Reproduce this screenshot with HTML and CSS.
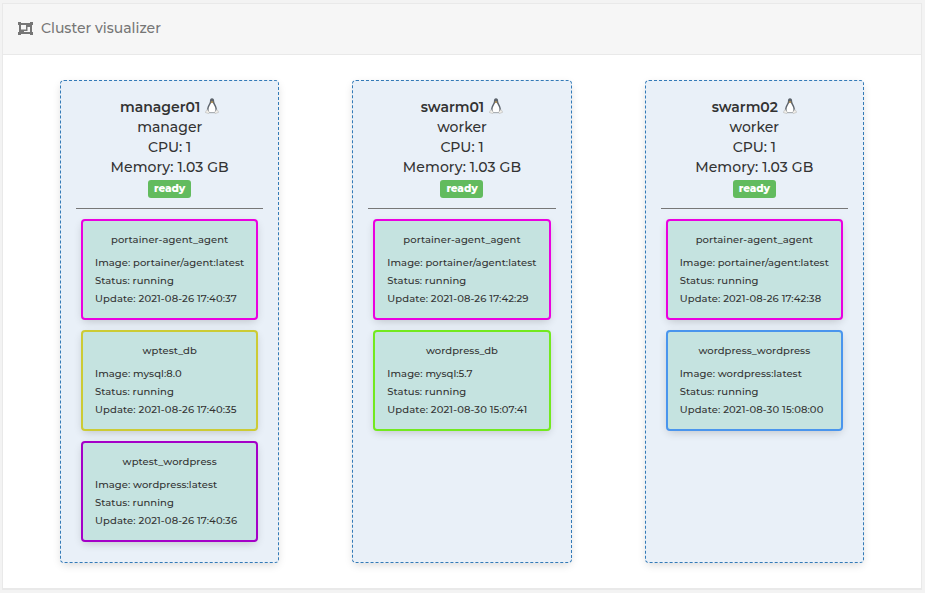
FILE: index.html
```html
<!DOCTYPE html>
<html lang="en">
<head>
<meta charset="utf-8">
<title>Cluster visualizer</title>
<link rel="stylesheet" href="styles.css">
</head>
<body>
<svg width="0" height="0" class="defs" aria-hidden="true">
  <symbol id="tux" viewBox="0 0 14 16">
    <path d="M4.900 3.500C4.900 1.400 5.600.3 7 .3s2.200 1.100 2.200 3.200c0 2 2.500 4.200 2.700 7.500l-1.200 3.200H3.300L2.100 11C2.300 7.700 4.900 5.500 4.900 3.500z" fill="#5c636c"/>
    <path d="M7 4.700c-1.200 0-1.500 1.700-2.500 3.300C3.300 9.900 3.200 13 4.300 14.300h5.400c1.100-1.300 1-4.400-.2-6.300C8.500 6.400 8.200 4.700 7 4.700z" fill="#fff"/>
    <path d="M5.500 3.900L7 3.200l1.600.7L7 5z" fill="#d3a653"/>
    <path d="M1.900 11.600l2.700 2.600-.8 1.300-3.500-1zM12.100 11.600l-2.700 2.600.8 1.300 3.500-1.200z" fill="#f3f1ec" stroke="#b5b5b3" stroke-width=".6"/>
    <path d="M4.300 14.700h5.400" stroke="#8a8f94" stroke-width=".7"/>
  </symbol>
</svg>
<main class="widget">
  <header class="widget-header">
    <svg class="group-icon" viewBox="0 0 15 13" aria-hidden="true">
      <path d="M0 0h3v1h9V0h3v3h-1v7h1v3h-3v-1H3v1H0v-3h1V3H0z" fill="#767676"/>
      <path d="M3 3h5v4.500H3zM9.500 5H12v5H6V9h3.500z" fill="#f6f6f6"/>
    </svg>
    <span>Cluster visualizer</span>
  </header>
  <div class="nodes">
    <section class="node">
      <div class="node-info">
        <div class="node-name"><b>manager01</b><svg class="tux"><use href="#tux"/></svg></div>
        <div>manager</div>
        <div>CPU: 1</div>
        <div class="memory">Memory: 1.03 GB</div>
        <span class="label">ready</span>
      </div>
      <div class="tasks">
        <article class="task magenta"><div class="task-name">portainer-agent_agent</div><div>Image: portainer/agent:latest</div><div>Status: running</div><div class="updated">Update: 2021-08-26 17:40:37</div></article>
        <article class="task yellow"><div class="task-name">wptest_db</div><div>Image: mysql:8.0</div><div>Status: running</div><div class="updated">Update: 2021-08-26 17:40:35</div></article>
        <article class="task purple"><div class="task-name">wptest_wordpress</div><div>Image: wordpress:latest</div><div>Status: running</div><div class="updated">Update: 2021-08-26 17:40:36</div></article>
      </div>
    </section>
    <section class="node">
      <div class="node-info">
        <div class="node-name"><b>swarm01</b><svg class="tux"><use href="#tux"/></svg></div>
        <div>worker</div>
        <div>CPU: 1</div>
        <div class="memory">Memory: 1.03 GB</div>
        <span class="label">ready</span>
      </div>
      <div class="tasks">
        <article class="task magenta"><div class="task-name">portainer-agent_agent</div><div>Image: portainer/agent:latest</div><div>Status: running</div><div class="updated">Update: 2021-08-26 17:42:29</div></article>
        <article class="task green"><div class="task-name">wordpress_db</div><div>Image: mysql:5.7</div><div>Status: running</div><div class="updated">Update: 2021-08-30 15:07:41</div></article>
      </div>
    </section>
    <section class="node">
      <div class="node-info">
        <div class="node-name"><b>swarm02</b><svg class="tux"><use href="#tux"/></svg></div>
        <div>worker</div>
        <div>CPU: 1</div>
        <div class="memory">Memory: 1.03 GB</div>
        <span class="label">ready</span>
      </div>
      <div class="tasks">
        <article class="task magenta"><div class="task-name">portainer-agent_agent</div><div>Image: portainer/agent:latest</div><div>Status: running</div><div class="updated">Update: 2021-08-26 17:42:38</div></article>
        <article class="task blue"><div class="task-name">wordpress_wordpress</div><div>Image: wordpress:latest</div><div>Status: running</div><div class="updated">Update: 2021-08-30 15:08:00</div></article>
      </div>
    </section>
  </div>
</main>
</body>
</html>
```
FILE: styles.css
```css
* { box-sizing: border-box; }
body {
  margin: 0;
  padding: 3px 3px 0 2px;
  height: 593px;
  overflow: hidden;
  background: #f3f3f3;
  color: #333;
  font-family: Montserrat, Inter, "Liberation Sans", sans-serif;
}
.defs { display: block; height: 0; }
.widget {
  height: 587px;
  background: #fff;
  border: 1px solid #e9e9e9;
  border-bottom-width: 2px;
}
.widget-header {
  height: 51px;
  padding: 0 15px 2px;
  display: flex;
  align-items: center;
  gap: 8px;
  background: #f6f6f6;
  border-bottom: 1px solid #e9e9e9;
  color: #767676;
  font-size: 14px;
  font-weight: 500;
}
.group-icon { width: 15px; height: 13px; }
.nodes {
  display: flex;
  gap: 73px;
  padding: 25px 57px 0;
}
.node {
  flex: 1;
  height: 483px;
  padding: 16px 15px;
  background: #e9f0f8;
  border: 1px dashed #337ab7;
  border-radius: 4px;
  box-shadow: 0 3px 10px -2px rgba(0, 0, 0, .18);
}
.node-info {
  height: 112px;
  border-bottom: 1px solid #777;
  font-size: 14px;
  font-weight: 500;
  line-height: 20px;
  text-align: center;
}
.node-name {
  display: flex;
  justify-content: center;
  align-items: center;
  gap: 5px;
}
.node-name b { font-weight: 600; }
.memory { letter-spacing: .1px; }
.tux { width: 14px; height: 16px; margin-top: -2px; }
.label {
  display: block;
  width: 43px;
  height: 18px;
  margin: 3px auto 0;
  border-radius: 3px;
  background: #62bb5e;
  color: #fff;
  font-size: 10.500px;
  font-weight: 800;
  line-height: 17px;
  letter-spacing: -.1px;
}
.tasks {
  display: grid;
  gap: 10px;
  padding: 10px 5px;
}
.task {
  height: 101px;
  padding: 10px 12px 8px;
  border: 2px solid;
  border-radius: 4px;
  background: #c5e3e0;
  box-shadow: 0 3px 10px -2px rgba(0, 0, 0, .2);
  font-size: 10px;
  font-weight: 500;
  line-height: 18px;
  letter-spacing: .06px;
  white-space: nowrap;
}
.task > div { color: #333; }
.task-name { margin-bottom: 5px; text-align: center; }
.updated { letter-spacing: .12px; }
.magenta { border-color: #ea00e0; }
.yellow { border-color: #cccb35; }
.purple { border-color: #a400c8; }
.green { border-color: #72e91f; }
.blue { border-color: #4a95ed; }
```
